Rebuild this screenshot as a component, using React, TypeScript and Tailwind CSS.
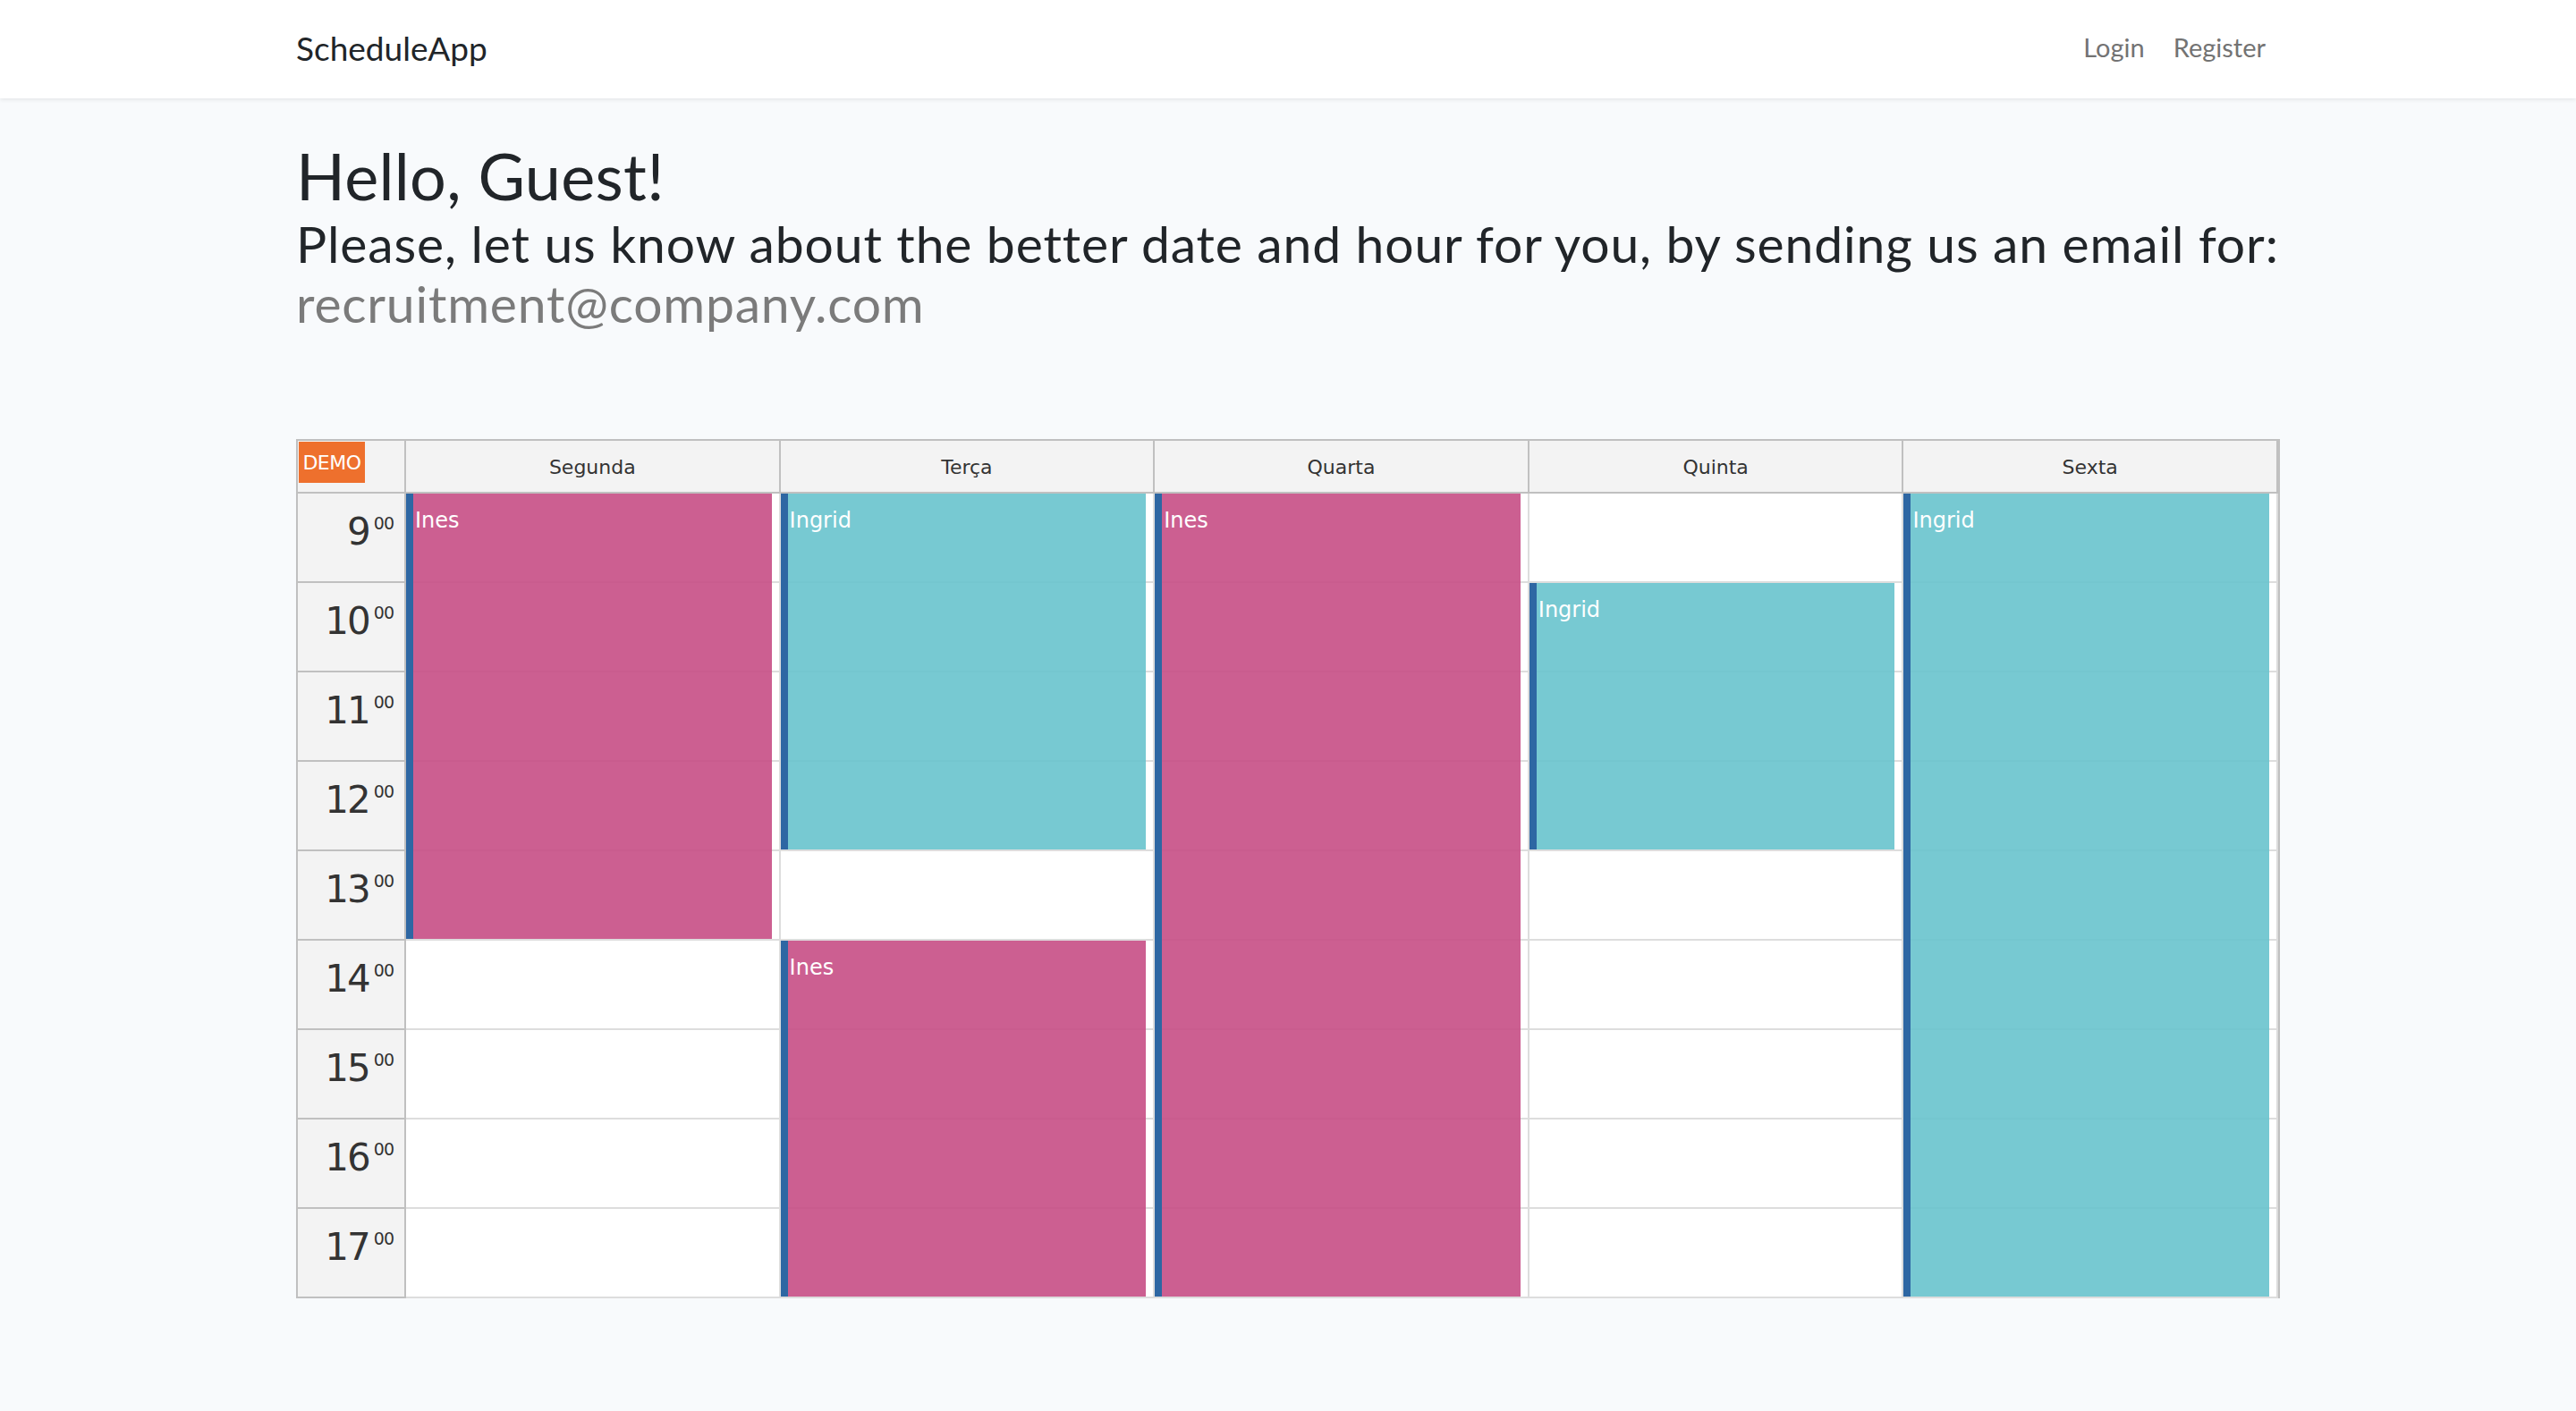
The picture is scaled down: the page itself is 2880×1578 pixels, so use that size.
import React from 'react'

type Ev = { day: number; start: number; span: number; name: string; kind: 'pink' | 'teal' }

const DAYS = ['Segunda', 'Terça', 'Quarta', 'Quinta', 'Sexta']
const HOURS = [9, 10, 11, 12, 13, 14, 15, 16, 17]

const EVENTS: Ev[] = [
    { day: 0, start: 0, span: 5, name: 'Ines', kind: 'pink' },
    { day: 1, start: 0, span: 4, name: 'Ingrid', kind: 'teal' },
    { day: 1, start: 5, span: 4, name: 'Ines', kind: 'pink' },
    { day: 2, start: 0, span: 9, name: 'Ines', kind: 'pink' },
    { day: 3, start: 1, span: 3, name: 'Ingrid', kind: 'teal' },
    { day: 4, start: 0, span: 9, name: 'Ingrid', kind: 'teal' },
]

// full class names, so tailwind picks them up
const COL = ['col-start-2', 'col-start-3', 'col-start-4', 'col-start-5', 'col-start-6']
const ROW = ['row-start-2', 'row-start-3', 'row-start-4', 'row-start-5', 'row-start-6', 'row-start-7', 'row-start-8', 'row-start-9', 'row-start-10']
const SPAN = ['row-span-1', 'row-span-2', 'row-span-3', 'row-span-4', 'row-span-5', 'row-span-6', 'row-span-7', 'row-span-8', 'row-span-9']
const KIND = {
    pink: 'bg-[rgba(198,78,133,0.9)]',
    teal: 'bg-[rgba(104,195,205,0.9)]',
}

const calFont = { fontFamily: '"DejaVu Sans", Tahoma, sans-serif' }

function Calendar() {
    return (
        <div
            className="grid grid-cols-[121px_repeat(5,minmax(0,1fr))] grid-rows-[59px_repeat(9,100px)] border-l-2 border-t-2 border-r-2 border-[#c0c0c0] text-[#333]"
            style={calFont}
        >
            {/* corner */}
            <div className="col-start-1 row-start-1 bg-[#f3f3f3] border-r-2 border-b-2 border-[#c0c0c0] p-[1px]">
                <span className="flex w-[74px] h-[46px] items-center justify-center bg-[#ee702d] text-white text-[22px] tracking-[-0.5px]">
                    DEMO
                </span>
            </div>

            {DAYS.map((d, i) => (
                <div
                    key={d}
                    className={`${COL[i]} row-start-1 bg-[#f3f3f3] border-r-2 border-b-2 border-[#c0c0c0] flex items-center justify-center text-[22px] pt-[2px]`}
                >
                    {d}
                </div>
            ))}

            {HOURS.map((h, r) => (
                <React.Fragment key={h}>
                    <div className={`col-start-1 ${ROW[r]} bg-[#f3f3f3] border-r-2 border-b-2 border-[#c0c0c0] flex justify-end pr-[12px] pt-[18px]`}>
                        <span className="text-[42px] leading-[50px] tracking-[-2px]">{h}</span>
                        <span className="text-[19px] leading-[30px] ml-[5px] tracking-[-1px]">00</span>
                    </div>
                    {DAYS.map((d, i) => (
                        <div key={d} className={`${COL[i]} ${ROW[r]} bg-white border-r-2 border-b-2 border-[#dddddd]`} />
                    ))}
                </React.Fragment>
            ))}

            {EVENTS.map((e, k) => (
                <div
                    key={k}
                    className={`${COL[e.day]} ${ROW[e.start]} ${SPAN[e.span - 1]} ${KIND[e.kind]} z-10 mr-[10px] mb-[2px] border-l-[8px] border-[#2e67a3] pl-[2px] pt-[15px] text-white text-[24px] leading-[30px]`}
                >
                    {e.name}
                </div>
            ))}
        </div>
    )
}

export default function App() {
    return (
        <div className="min-h-screen bg-[#f8fafc] text-[#212529]" style={{ fontFamily: 'Lato, "Open Sans", sans-serif' }}>
            <nav className="h-[110px] bg-white shadow-[0_2px_4px_rgba(0,0,0,0.075)]">
                <div className="w-[2218px] mx-auto flex justify-between">
                    <span className="pt-[31px] text-[37px] leading-[45px] text-[#212529]">ScheduleApp</span>
                    <div className="flex pt-[35px] text-[29px] leading-[35px] text-[#737373]">
                        <span className="px-[16px]">Login</span>
                        <span className="px-[16px]">Register</span>
                    </div>
                </div>
            </nav>

            <main className="w-[2218px] mx-auto pt-[43px] pb-[80px]">
                <h1 className="text-[72px] leading-[86px] tracking-[0.3px]">Hello, Guest!</h1>
                <h3 className="text-[57px] leading-[67px] tracking-[0.9px] whitespace-nowrap">
                    Please, let us know about the better date and hour for you, by sending us an email for:
                </h3>
                <h3 className="text-[57px] leading-[67px] tracking-[0.8px] text-[#7b7b7b]">recruitment@company.com</h3>

                <div className="mt-[118px]">
                    <Calendar />
                </div>
            </main>
        </div>
    )
}
